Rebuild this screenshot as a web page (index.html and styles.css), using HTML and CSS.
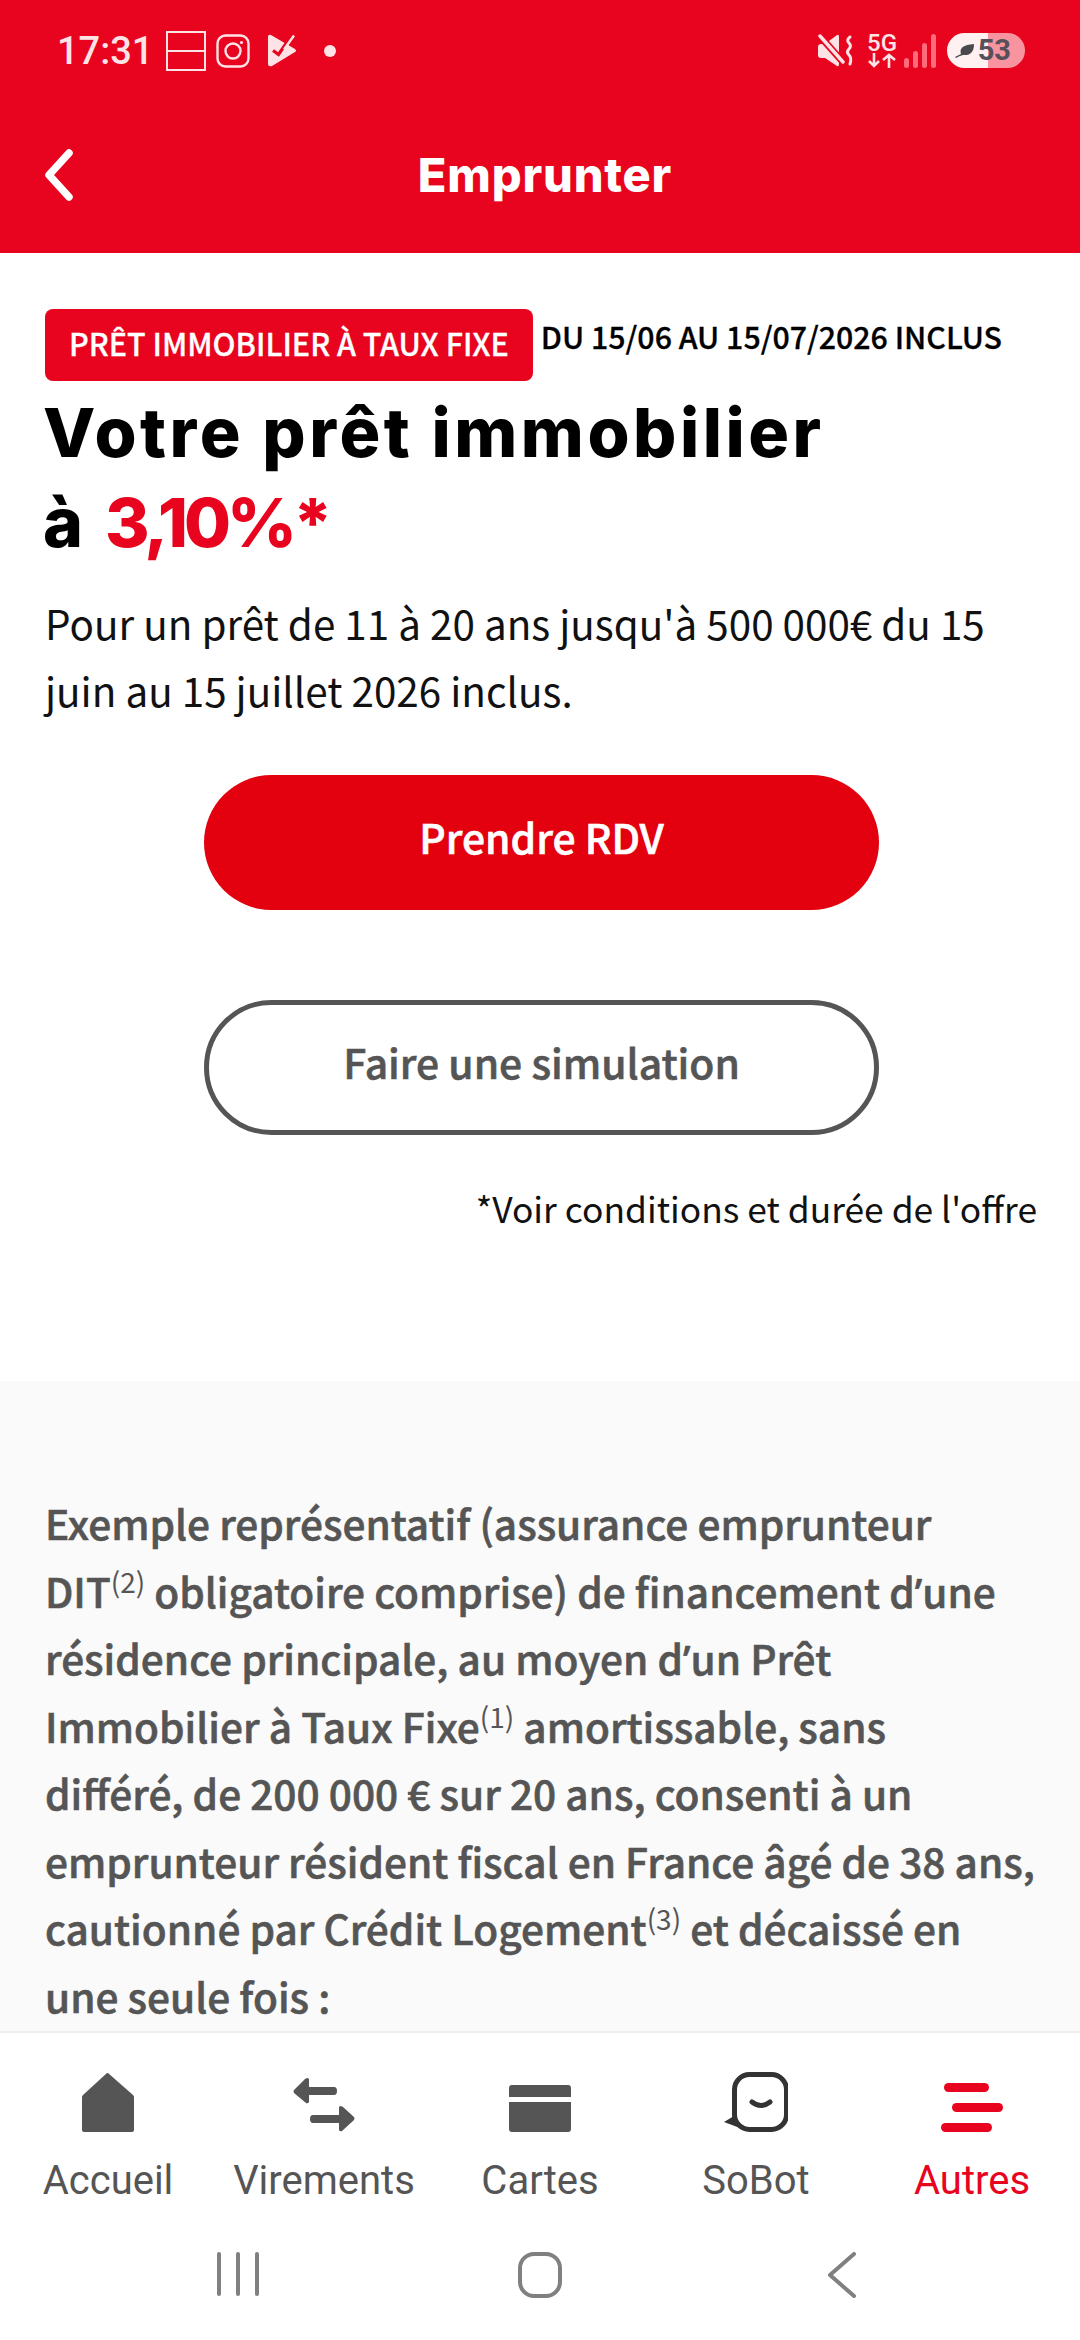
FILE: index.html
```html
<!DOCTYPE html>
<html lang="fr">
<head>
<meta charset="utf-8">
<title>Emprunter</title>
<link rel="stylesheet" href="styles.css">
</head>
<body>
<div class="app">
  <header class="top">
    <div class="status">
      <div class="status-left">
        <span class="time">17:31</span>
        <svg class="ic-split" width="40" height="40" viewBox="0 0 40 40"><path d="M1 1h38v38H1zM1 20h38" fill="none" stroke="#fde3e6" stroke-width="2"/></svg>
        <svg class="ic-insta" width="34" height="34" viewBox="0 0 34 34" fill="none" stroke="#fde3e6" stroke-width="2.4"><rect x="1.5" y="1.5" width="31" height="31" rx="8"/><circle cx="17" cy="17" r="7.5"/><circle cx="25.5" cy="8.5" r="1.6" fill="#fde3e6" stroke="none"/></svg>
        <svg class="ic-play" width="30" height="33" viewBox="0 0 30 33"><path d="M1 3Q1 0 4 1L28 15Q30 17 28 18L5 32Q1 33 1 30Z" fill="#fde3e6"/><path d="M6 16.500l5.500 4L24 2.500" fill="none" stroke="#e8041e" stroke-width="3.200"/><path d="M26 0l4 3-6 9-4-3z" fill="#e8041e"/><path d="M17 15.500L27 1.500" stroke="#fde3e6" stroke-width="2.400"/></svg>
        <span class="dot"></span>
      </div>
      <div class="status-right">
        <svg class="ic-mute" width="36" height="34" viewBox="0 0 36 34"><path d="M0 13q0-3 3-3h4L19 1q2-1 2 2v27q0 3-2 2L7 24H3q-3 0-3-3z" fill="#fde3e6"/><path d="M1 1l23 26" stroke="#e8041e" stroke-width="7"/><path d="M2 2l23 26" stroke="#fde3e6" stroke-width="3.400" stroke-linecap="round"/><path d="M32 3q-4 3-1 6t0 6q-3 3 0 6t1 9" fill="none" stroke="#fde3e6" stroke-width="3" stroke-linecap="round"/></svg>
        <div class="net">
          <span class="net-5g">5G</span>
          <svg width="30" height="15" viewBox="0 0 30 15" fill="none" stroke="#fde3e6" stroke-width="2.600"><path d="M7 0v13M2 8l5 5 5-5M22 15V2M16 7l6-5 6 5"/></svg>
        </div>
        <svg class="ic-signal" width="32" height="34" viewBox="0 0 32 34" fill="#ff6b7a"><rect x="0" y="24" width="5" height="10" rx="2.500"/><rect x="9" y="17" width="5" height="17" rx="2.500"/><rect x="18" y="9" width="5" height="25" rx="2.500"/><rect x="27" y="0" width="5" height="34" rx="2.500"/></svg>
        <div class="battery">
          <svg width="20" height="14" viewBox="0 0 20 14"><path d="M0 13Q4 11 6 10Q3 1 19 0Q19 12 8 11Q4 12 1 14Z" fill="#4a4a4e"/></svg>
          <span class="batt-num">53</span>
        </div>
      </div>
    </div>
    <div class="titlebar">
      <svg class="back" width="30" height="52" viewBox="0 0 30 52"><path d="M25 4L5 26l20 22" fill="none" stroke="#fff" stroke-width="7.500" stroke-linecap="round" stroke-linejoin="round"/></svg>
      <h1 class="screen-title">Emprunter</h1>
    </div>
  </header>

  <main class="content">
    <section class="offer">
      <div class="tags">
        <span class="badge">PRÊT IMMOBILIER À TAUX FIXE</span>
        <span class="dates">DU 15/06 AU 15/07/2026 INCLUS</span>
      </div>
      <h2 class="headline">Votre prêt immobilier<br>à <em>3,10%*</em></h2>
      <p class="lead">Pour un prêt de 11 à 20 ans jusqu'à 500 000€ du 15 juin au 15 juillet 2026 inclus.</p>
      <div class="actions">
        <a class="btn btn-primary">Prendre RDV</a>
        <a class="btn btn-outline">Faire une simulation</a>
      </div>
      <p class="note">*Voir conditions et durée de l'offre</p>
    </section>
    <section class="example">
      <p>Exemple représentatif (assurance emprunteur<br>DIT<sup>(2)</sup> obligatoire comprise) de financement d<span class="apos">’</span>une<br>résidence principale, au moyen d<span class="apos">’</span>un Prêt<br>Immobilier à Taux Fixe<sup>(1)</sup> amortissable, sans<br>différé, de 200 000 € sur 20 ans, consenti à un<br>emprunteur résident fiscal en France âgé de 38 ans,<br>cautionné par Crédit Logement<sup>(3)</sup> et décaissé en<br>une seule fois :</p>
    </section>
  </main>

  <nav class="tabs">
    <div class="tab">
      <svg width="52" height="60" viewBox="0 0 52 60"><path d="M26 1L51 23q1 1 1 2v33q0 2-2 2H2q-2 0-2-2V25q0-1 1-2L25 1z" fill="#555"/></svg>
      <span>Accueil</span>
    </div>
    <div class="tab">
      <svg width="62" height="54" viewBox="0 0 62 54" fill="#555"><path d="M14 0q1 0 2 1v8h25q3 0 3 4t-3 4H16v7q-1 2-3 1L1 15q-1-2 0-3L12 1z"/><path d="M48 28q-1 0-2 1v8H20q-3 0-3 4t3 4h26v7q1 2 3 1l12-11q1-2 0-3L50 29z"/></svg>
      <span>Virements</span>
    </div>
    <div class="tab">
      <svg width="62" height="47" viewBox="0 0 62 47" fill="#555"><path d="M3 0h56q3 0 3 3v9H0V3q0-3 3-3zM0 17h62v27q0 3-3 3H3q-3 0-3-3z"/></svg>
      <span>Cartes</span>
    </div>
    <div class="tab">
      <svg width="64" height="60" viewBox="0 0 64 60"><rect x="10.500" y="2.500" width="52" height="55" rx="15" fill="none" stroke="#333" stroke-width="5"/><path d="M0 50l10-6 6 12z" fill="#333"/><path d="M28 30q9 7 18 0" fill="none" stroke="#333" stroke-width="5" stroke-linecap="round"/></svg>
      <span>SoBot</span>
    </div>
    <div class="tab tab-active">
      <svg width="62" height="49" viewBox="0 0 62 49" fill="#e8041e"><rect x="3" y="0" width="45" height="9" rx="4.500"/><rect x="11" y="20" width="51" height="9" rx="4.500"/><rect x="0" y="40" width="51" height="9" rx="4.500"/></svg>
      <span>Autres</span>
    </div>
  </nav>

  <div class="sysnav">
    <svg width="42" height="44" viewBox="0 0 42 44" fill="#808080"><rect x="0" y="0" width="4" height="44" rx="2"/><rect x="19" y="0" width="4" height="44" rx="2"/><rect x="38" y="0" width="4" height="44" rx="2"/></svg>
    <svg width="44" height="46" viewBox="0 0 44 46"><rect x="2" y="2" width="40" height="42" rx="14" fill="none" stroke="#808080" stroke-width="4"/></svg>
    <svg width="30" height="46" viewBox="0 0 30 46"><path d="M27 2L3 23l24 21" fill="none" stroke="#808080" stroke-width="4" stroke-linecap="round" stroke-linejoin="round"/></svg>
  </div>
</div>
</body>
</html>
```

FILE: styles.css
```css
* { box-sizing: border-box; }
html, body { margin: 0; padding: 0; }
body { background: #fff; font-family: "Noto Sans CJK SC", "Noto Sans", sans-serif; }
.app { width: 1080px; height: 2340px; display: flex; flex-direction: column; overflow: hidden; }

.top { background: #e8041e; height: 253px; flex: none; color: #fff; }
.status { height: 101px; display: flex; justify-content: space-between; align-items: center; padding: 0 55px 0 57px; }
.status-left, .status-right { display: flex; align-items: center; }
.time { font: 500 38px/1 Roboto, sans-serif; color: #fde3e6; width: 90px; }
.ic-split { margin-left: 19px; }
.ic-insta { margin-left: 10px; }
.ic-play { margin-left: 17px; }
.dot { width: 12px; height: 12px; border-radius: 50%; background: #fde3e6; margin-left: 27px; }
.ic-mute { margin-right: 13px; }
.net { width: 30px; display: flex; flex-direction: column; align-items: center; margin-right: 7px; }
.net-5g { font: 500 24px/20px Roboto, sans-serif; color: #fde3e6; }
.ic-signal { margin-right: 11px; }
.battery { width: 78px; height: 35px; border-radius: 18px; display: flex; align-items: center; justify-content: flex-end; gap: 3px; padding-right: 14px; background: linear-gradient(to right, #fff0f1 53%, #f8949f 53%); }
.batt-num { font: 700 29px/1 Roboto, sans-serif; color: #55505a; }

.titlebar { height: 152px; position: relative; display: flex; align-items: center; justify-content: center; padding: 0 0 6px 10px; }
.back { position: absolute; left: 44px; top: 48px; }
.screen-title { margin: 0; font: 800 47px/1 Inter, sans-serif; letter-spacing: 0.8px; color: #fff; }

.content { flex: 1; min-height: 0; overflow: hidden; display: flex; flex-direction: column; }
.offer { height: 1128px; flex: none; padding: 56px 45px 0; }
.tags { display: flex; align-items: flex-start; }
.badge { background: #e8041e; color: #fff; border-radius: 8px; height: 72px; display: flex; align-items: center; padding: 0 24px 5px; font-size: 30.5px; font-weight: 500; white-space: nowrap; -webkit-text-stroke: 0.3px currentColor; }
.dates { margin-left: 8px; font-size: 30.3px; font-weight: 500; line-height: 54px; color: #000; white-space: nowrap; -webkit-text-stroke: 0.3px currentColor; }
.headline { margin: 6px 0 0 -2px; font: 800 68px/90px Inter, sans-serif; letter-spacing: 3.5px; color: #000; }
.headline em { font-style: normal; color: #e8041e; letter-spacing: -4px; }
.lead { margin: 22px 0 0; font-size: 40.4px; line-height: 67px; color: #111; }
.actions { display: flex; flex-direction: column; align-items: center; gap: 90px; margin-top: 52px; margin-left: 3px; }
.btn { width: 675px; height: 135px; border-radius: 68px; display: flex; align-items: center; justify-content: center; font-size: 40.8px; font-weight: 500; padding-bottom: 12px; -webkit-text-stroke: 0.6px currentColor; }
.btn-primary { background: #e3000f; color: #fff; }
.btn-outline { border: 5px solid #555; color: #555; }
.note { margin: 46px -2px 0 0; text-align: right; font-size: 35.4px; line-height: 54px; color: #111; }

.example { flex: 1; background: #fafafa; padding: 108px 20px 0 45px; }
.example p { margin: 0; font-size: 40.6px; line-height: 67.5px; font-weight: 500; color: #555; -webkit-text-stroke: 0.6px currentColor; }
.example sup { font-size: 28px; font-weight: 400; line-height: 0; -webkit-text-stroke: 0; }
.apos { font-family: "Noto Sans", sans-serif; line-height: 0; }

.tabs { flex: none; height: 197px; background: #fff; display: grid; grid-template-columns: repeat(5, 216px); border-top: 2px solid #eee; }
.tab { display: flex; flex-direction: column; align-items: center; justify-content: flex-end; color: #555; font: 400 40px/46px Roboto, sans-serif; padding-bottom: 24px; }
.tab svg { margin-bottom: 26px; }
.tab-active { color: #e8041e; }
.sysnav { flex: none; height: 112px; background: #fff; display: grid; grid-template-columns: repeat(3, 302px); justify-content: center; justify-items: center; align-items: start; padding-top: 24px; }
```
